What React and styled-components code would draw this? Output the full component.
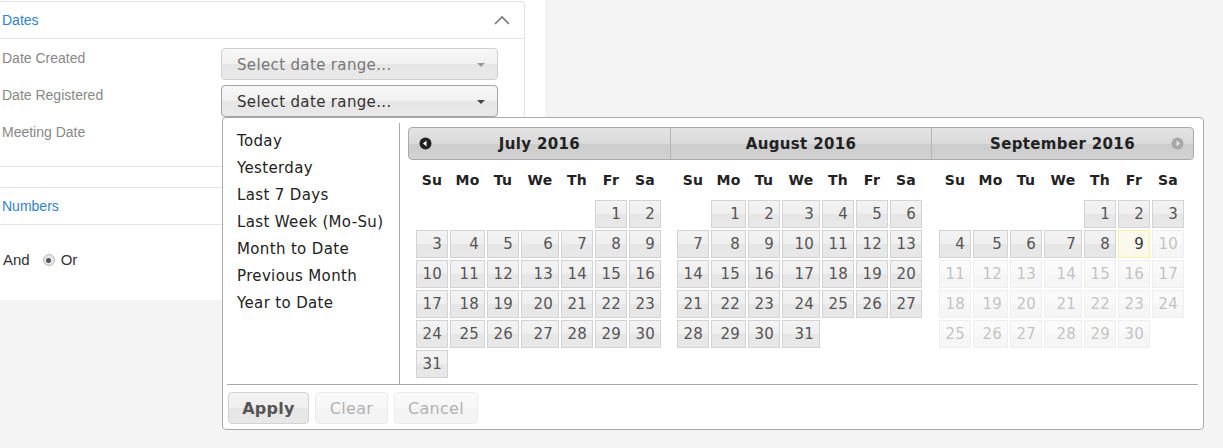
import React from 'react';
import styled, { createGlobalStyle, css } from 'styled-components';

const GlobalStyle = createGlobalStyle`
  body {
    margin: 0;
    background: #f4f4f4;
    font-family: "Liberation Sans", Arial, sans-serif;
  }
`;

const VERDANA = `"DejaVu Sans", Verdana, sans-serif`;

const Page = styled.div`
  width: 1223px;
  height: 448px;
  position: relative;
`;

const SidePanel = styled.div`
  width: 545px;
  height: 300px;
  background: #fff;
  padding-top: 1px;
  box-sizing: border-box;
`;

const Card = styled.div`
  width: 525px;
  box-sizing: border-box;
  border-top: 1px solid #e4e4e4;
  border-right: 1px solid #e4e4e4;
  border-bottom: ${({ $open }) => ($open ? '1px solid #e4e4e4' : 'none')};
  border-top-right-radius: 4px;
  margin-top: ${({ $gap = 0 }) => $gap}px;
`;

const CardHeader = styled.div`
  height: 37px;
  box-sizing: border-box;
  border-bottom: 1px solid #e4e4e4;
  display: flex;
  align-items: center;
  justify-content: space-between;
  padding: 0 14px 0 2px;
`;

const CardTitle = styled.span`
  color: #2f82d2;
  font-size: 14px;
`;

const CardBody = styled.div`
  padding: 9px 0 12px;
  display: flex;
  flex-direction: column;
  gap: 5px;
`;

const FieldRow = styled.div`
  display: flex;
  align-items: flex-start;
  height: 32px;
`;

const FieldLabel = styled.div`
  width: 219px;
  padding-left: 2px;
  line-height: 20px;
  font-size: 14px;
  color: #888;
`;

const SelectWrap = styled.div`
  position: relative;
`;

const RangeSelect = styled.div`
  width: 277px;
  height: 32px;
  box-sizing: border-box;
  border: 1px solid ${({ $active }) => ($active ? '#a3a3a3' : '#d0d0d0')};
  border-radius: 4px;
  background: linear-gradient(#f7f7f7 0%, #f1f1f1 50%, #e6e6e6 51%, #e9e9e9 100%);
  display: flex;
  align-items: center;
  justify-content: space-between;
  padding: 1px 12px 0 15px;
  font-family: ${VERDANA};
  font-size: 15px;
  letter-spacing: 0.35px;
  color: ${({ $active }) => ($active ? '#333' : '#777')};
`;

const Caret = styled.span`
  width: 0;
  height: 0;
  border-left: 4px solid transparent;
  border-right: 4px solid transparent;
  border-top: 4px solid ${({ $active }) => ($active ? '#444' : '#999')};
`;

const LogicRow = styled.div`
  padding: 27px 0 0 3px;
  display: flex;
  align-items: center;
  font-size: 15px;
  color: #333;
  line-height: 16px;
`;

const Radio = styled.span`
  width: 12px;
  height: 12px;
  box-sizing: border-box;
  border-radius: 50%;
  border: 1px solid #b8b8b8;
  background: #e8e8e8;
  margin: 0 6px 0 13px;
  display: flex;
  align-items: center;
  justify-content: center;
  &::after {
    content: '';
    width: 5px;
    height: 5px;
    border-radius: 50%;
    background: #555;
  }
`;

/* ---------- date range popup ---------- */

const Popup = styled.div`
  position: absolute;
  top: 32px;
  left: 1px;
  width: 982px;
  height: 313px;
  box-sizing: border-box;
  background: #fff;
  border: 1px solid #aaa;
  border-radius: 4px;
  padding: 5px 5px 5px 4px;
  display: flex;
  flex-direction: column;
  font-family: ${VERDANA};
  letter-spacing: 0.35px;
  z-index: 2;
`;

const PopupBody = styled.div`
  height: 261px;
  display: flex;
`;

const RangeList = styled.ul`
  list-style: none;
  margin: 0;
  width: 174px;
  box-sizing: border-box;
  border-right: 1px solid #aaa;
  padding: 5px 0 0 10px;
`;

const RangeItem = styled.li`
  height: 27px;
  line-height: 27px;
  font-size: 15px;
  color: #222;
`;

const Calendars = styled.div`
  padding: 4px 4px 0 8px;
`;

const HeaderBar = styled.div`
  display: grid;
  grid-template-columns: 261px 261px 262px;
  height: 33px;
  box-sizing: border-box;
  border: 1px solid #aaa;
  border-radius: 4px;
  background: linear-gradient(#e4e4e4 0%, #dadada 50%, #cccccc 51%, #d2d2d2 100%);
`;

const MonthTitle = styled.div`
  position: relative;
  display: flex;
  align-items: center;
  justify-content: center;
  font-weight: bold;
  font-size: 15px;
  color: #222;
  ${({ $divided }) => $divided && css`border-left: 1px solid #b4b4b4;`}
`;

const NavIcon = styled.svg`
  position: absolute;
  top: 9px;
  ${({ $side }) => ($side === 'prev' ? 'left: 10px;' : 'right: 9px;')}
`;

const MonthsRow = styled.div`
  display: grid;
  grid-template-columns: 261px 261px 262px;
`;

const Month = styled.div`
  padding-left: ${({ $pad }) => $pad}px;
`;

const COLS = '32px 35px 32px 38px 32px 32px 32px';

const DowRow = styled.div`
  display: grid;
  grid-template-columns: ${COLS};
  column-gap: 2px;
  height: 40px;
  align-items: center;
`;

const Dow = styled.div`
  text-align: center;
  font-weight: bold;
  font-size: 14px;
  color: #222;
`;

const DayGrid = styled.div`
  display: grid;
  grid-template-columns: ${COLS};
  grid-auto-rows: 28px;
  gap: 2px;
`;

const Day = styled.div`
  box-sizing: border-box;
  border: 1px solid #d3d3d3;
  background: linear-gradient(#f3f3f3 0%, #efefef 50%, #e6e6e6 51%, #e8e8e8 100%);
  color: #555;
  font-size: 15px;
  line-height: 26px;
  text-align: right;
  padding-right: 5px;
  letter-spacing: 0.2px;
  ${({ $today }) => $today && css`
    border-color: #fcefa1;
    background: #fbf9ee;
    color: #363636;
  `}
  ${({ $disabled }) => $disabled && css`
    opacity: 0.35;
  `}
`;

const Footer = styled.div`
  border-top: 1px solid #aaa;
  padding: 7px 0 0 1px;
  display: flex;
  gap: 6px;
`;

const Button = styled.button`
  height: 32px;
  width: ${({ $w }) => $w}px;
  box-sizing: border-box;
  border: 1px solid #d3d3d3;
  border-radius: 4px;
  background: linear-gradient(#f3f3f3 0%, #efefef 50%, #e6e6e6 51%, #e8e8e8 100%);
  font-family: ${VERDANA};
  font-size: 16px;
  letter-spacing: 0.3px;
  font-weight: ${({ $primary }) => ($primary ? 'bold' : 'normal')};
  color: #555;
  padding: 0;
  ${({ disabled }) => disabled && css`
    opacity: 0.45;
  `}
`;

const DOWS = ['Su', 'Mo', 'Tu', 'We', 'Th', 'Fr', 'Sa'];

const months = [
  { title: 'July 2016', start: 5, days: 31, pad: 8 },
  { title: 'August 2016', start: 1, days: 31, pad: 8 },
  { title: 'September 2016', start: 4, days: 30, pad: 9, today: 9 },
];

const ranges = [
  'Today', 'Yesterday', 'Last 7 Days', 'Last Week (Mo-Su)',
  'Month to Date', 'Previous Month', 'Year to Date',
];

const PrevIcon = () => (
  <NavIcon $side="prev" width="13" height="13" viewBox="0 0 13 13">
    <circle cx="6.5" cy="6.5" r="6" fill="#222" />
    <path d="M4 6.5 L7.5 3.5 L7.5 9.5 Z" fill="#fff" />
  </NavIcon>
);

const NextIcon = () => (
  <NavIcon $side="next" width="13" height="13" viewBox="0 0 13 13">
    <circle cx="6.5" cy="6.5" r="6" fill="#a8a8a8" />
    <path d="M9 6.5 L5.5 3.5 L5.5 9.5 Z" fill="#e6e6e6" />
  </NavIcon>
);

const MonthDays = ({ start, days, today }) => {
  const cells = [];
  for (let i = 0; i < start; i++) cells.push(<span key={`e${i}`} />);
  for (let d = 1; d <= days; d++) {
    cells.push(
      <Day key={d} $today={today === d} $disabled={today && d > today}>
        {d}
      </Day>
    );
  }
  return <DayGrid>{cells}</DayGrid>;
};

const DateRangePopup = () => (
  <Popup>
    <PopupBody>
      <RangeList>
        {ranges.map((r) => <RangeItem key={r}>{r}</RangeItem>)}
      </RangeList>
      <Calendars>
        <HeaderBar>
          {months.map((m, i) => (
            <MonthTitle key={m.title} $divided={i > 0}>
              {i === 0 && <PrevIcon />}
              {m.title}
              {i === months.length - 1 && <NextIcon />}
            </MonthTitle>
          ))}
        </HeaderBar>
        <MonthsRow>
          {months.map((m) => (
            <Month key={m.title} $pad={m.pad}>
              <DowRow>
                {DOWS.map((d) => <Dow key={d}>{d}</Dow>)}
              </DowRow>
              <MonthDays start={m.start} days={m.days} today={m.today} />
            </Month>
          ))}
        </MonthsRow>
      </Calendars>
    </PopupBody>
    <Footer>
      <Button $w={81} $primary>Apply</Button>
      <Button $w={73} disabled>Clear</Button>
      <Button $w={84} disabled>Cancel</Button>
    </Footer>
  </Popup>
);

const ChevronUp = () => (
  <svg width="16" height="10" viewBox="0 0 16 10">
    <path d="M1 9 L8 2 L15 9" fill="none" stroke="#777" strokeWidth="1.6" />
  </svg>
);

export default function App() {
  return (
    <Page>
      <GlobalStyle />
      <SidePanel>
        <Card $open>
          <CardHeader>
            <CardTitle>Dates</CardTitle>
            <ChevronUp />
          </CardHeader>
          <CardBody>
            <FieldRow>
              <FieldLabel>Date Created</FieldLabel>
              <RangeSelect>Select date range...<Caret /></RangeSelect>
            </FieldRow>
            <FieldRow>
              <FieldLabel>Date Registered</FieldLabel>
              <SelectWrap>
                <RangeSelect $active>Select date range...<Caret $active /></RangeSelect>
                <DateRangePopup />
              </SelectWrap>
            </FieldRow>
            <FieldRow>
              <FieldLabel>Meeting Date</FieldLabel>
            </FieldRow>
          </CardBody>
        </Card>
        <Card $gap={20}>
          <CardHeader>
            <CardTitle>Numbers</CardTitle>
          </CardHeader>
          <LogicRow>
            And<Radio />Or
          </LogicRow>
        </Card>
      </SidePanel>
    </Page>
  );
}
